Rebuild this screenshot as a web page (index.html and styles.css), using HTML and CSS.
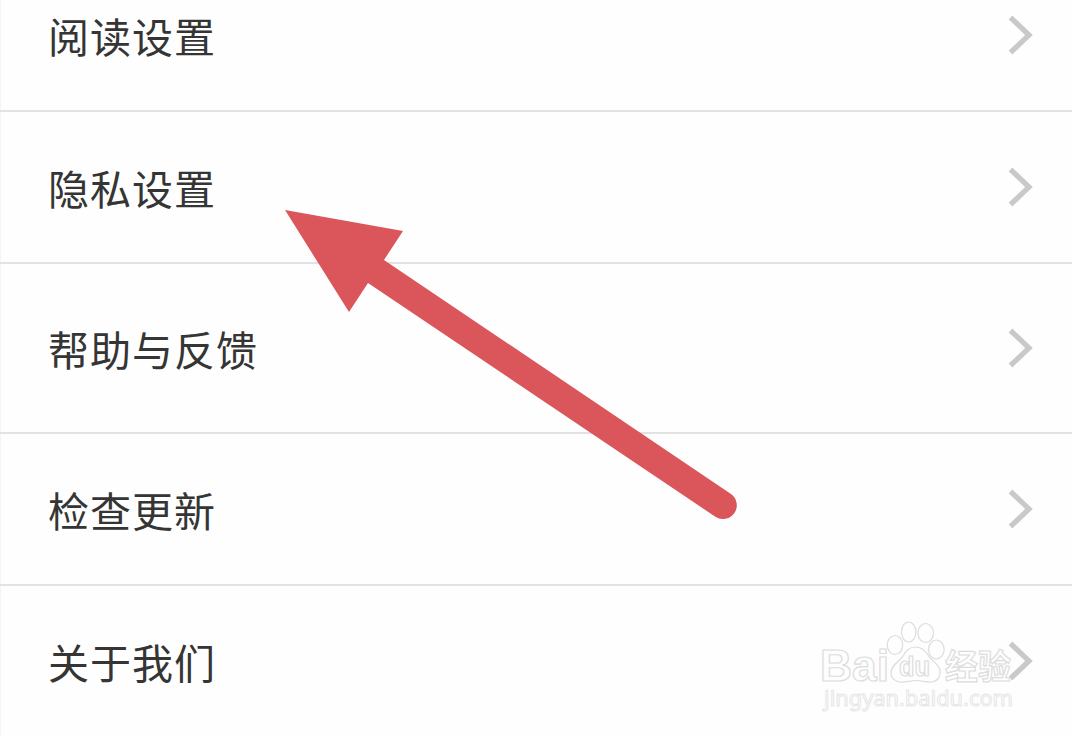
FILE: index.html
```html
<!DOCTYPE html>
<html lang="zh-CN">

<head>
    <meta charset="UTF-8">
    <meta name="viewport" content="width=device-width, initial-scale=1.0">
    <title>设置</title>
    <link rel="stylesheet" href="styles.css">
</head>

<body>

    <!-- Settings list -->
    <ul class="settings">
        <li class="row first">
            <span>阅读设置</span>
            <svg class="chevron" viewBox="0 0 26 40"><path d="M2.5 2.5 L21 20 L2.5 37.5" /></svg>
        </li>
        <li class="row">
            <span>隐私设置</span>
            <svg class="chevron" viewBox="0 0 26 40"><path d="M2.5 2.5 L21 20 L2.5 37.5" /></svg>
        </li>
        <li class="row tall">
            <span>帮助与反馈</span>
            <svg class="chevron" viewBox="0 0 26 40"><path d="M2.5 2.5 L21 20 L2.5 37.5" /></svg>
        </li>
        <li class="row">
            <span>检查更新</span>
            <svg class="chevron" viewBox="0 0 26 40"><path d="M2.5 2.5 L21 20 L2.5 37.5" /></svg>
        </li>
        <li class="row last">
            <span>关于我们</span>
            <svg class="chevron" viewBox="0 0 26 40"><path d="M2.5 2.5 L21 20 L2.5 37.5" /></svg>
        </li>
    </ul>

    <!-- Red pointer arrow -->
    <svg class="arrow" viewBox="0 0 460 330">
        <path d="M5 10 L123 31 L104 60 L451 294 A13.5 13.5 0 0 1 435 316.5 L88 83 L69 112 Z" />
    </svg>

    <!-- Watermark -->
    <svg class="watermark" viewBox="0 0 210 106">
        <text class="brand" x="8" y="66" textLength="69" lengthAdjust="spacingAndGlyphs">Bai</text>
        <g class="paw">
            <ellipse cx="83" cy="30" rx="7.8" ry="9.5" />
            <ellipse cx="96.7" cy="17" rx="7.2" ry="10" />
            <ellipse cx="113.7" cy="18" rx="7.8" ry="9.5" />
            <ellipse cx="124.3" cy="34.5" rx="7.8" ry="9.5" />
            <path d="M103.5 32 C97 32 94 36 91 41 C87 47 79 50 79 58 C79 63 83 66.5 88 67 C94 68 98 65.5 104 65.5 C110 65.5 115 67.5 120 67 C126 66 129 61 128 55 C126 48 119 46 116 40 C113 35 110 32 103.5 32 Z" />
        </g>
        <text class="du" x="87" y="61" textLength="31" lengthAdjust="spacingAndGlyphs">du</text>
        <text class="cn" x="133" y="64" textLength="66" lengthAdjust="spacingAndGlyphs">经验</text>
        <text class="url" x="12" y="91" textLength="189" lengthAdjust="spacingAndGlyphs">jingyan.baidu.com</text>
    </svg>

</body>

</html>
```
FILE: styles.css
```css
body {
    position: relative;
    margin: 0;
    height: 736px;
    overflow: hidden;
    background-color: #fefefe;
    font-family: "Noto Sans CJK SC", sans-serif;
    color: #353535;
}

.settings {
    list-style: none;
    margin: 0;
    padding: 0;
    box-shadow: inset 1px 0 #f5f5f5;
}

.row {
    display: flex;
    justify-content: space-between;
    align-items: center;
    box-sizing: border-box;
    height: 152px;
    padding: 0 38px 0 48px;
    border-bottom: 2px solid #e2e2e2;
    font-size: 41px;
    line-height: 60px;
    letter-spacing: 1px;
}

.row span {
    padding-bottom: 1px;
}

/* The list is scrolled, so the first row is cut at the top */
.first {
    height: 112px;
    padding-bottom: 40px;
}

.tall {
    height: 170px;
}

.last {
    height: 150px;
    border-bottom: none;
}

.chevron {
    width: 26px;
    height: 40px;
    fill: none;
    stroke: #c9c9cb;
    stroke-width: 5.2;
}

.arrow {
    position: absolute;
    left: 280px;
    top: 200px;
    width: 460px;
    height: 330px;
    fill: #db565b;
}

.watermark {
    position: absolute;
    left: 812px;
    top: 615px;
    width: 210px;
    height: 106px;
    fill: #fefefe;
    stroke: #dcdcdc;
    stroke-width: 1.2;
}

.brand {
    font: bold 44px "Liberation Sans", sans-serif;
}

.du {
    font: bold 27px "Liberation Sans", sans-serif;
}

.cn {
    font: bold 34px "Noto Sans CJK SC", sans-serif;
}

.url {
    font: 22px "Noto Sans", sans-serif;
    stroke: #e6e6e6;
    stroke-width: 1;
}
```
